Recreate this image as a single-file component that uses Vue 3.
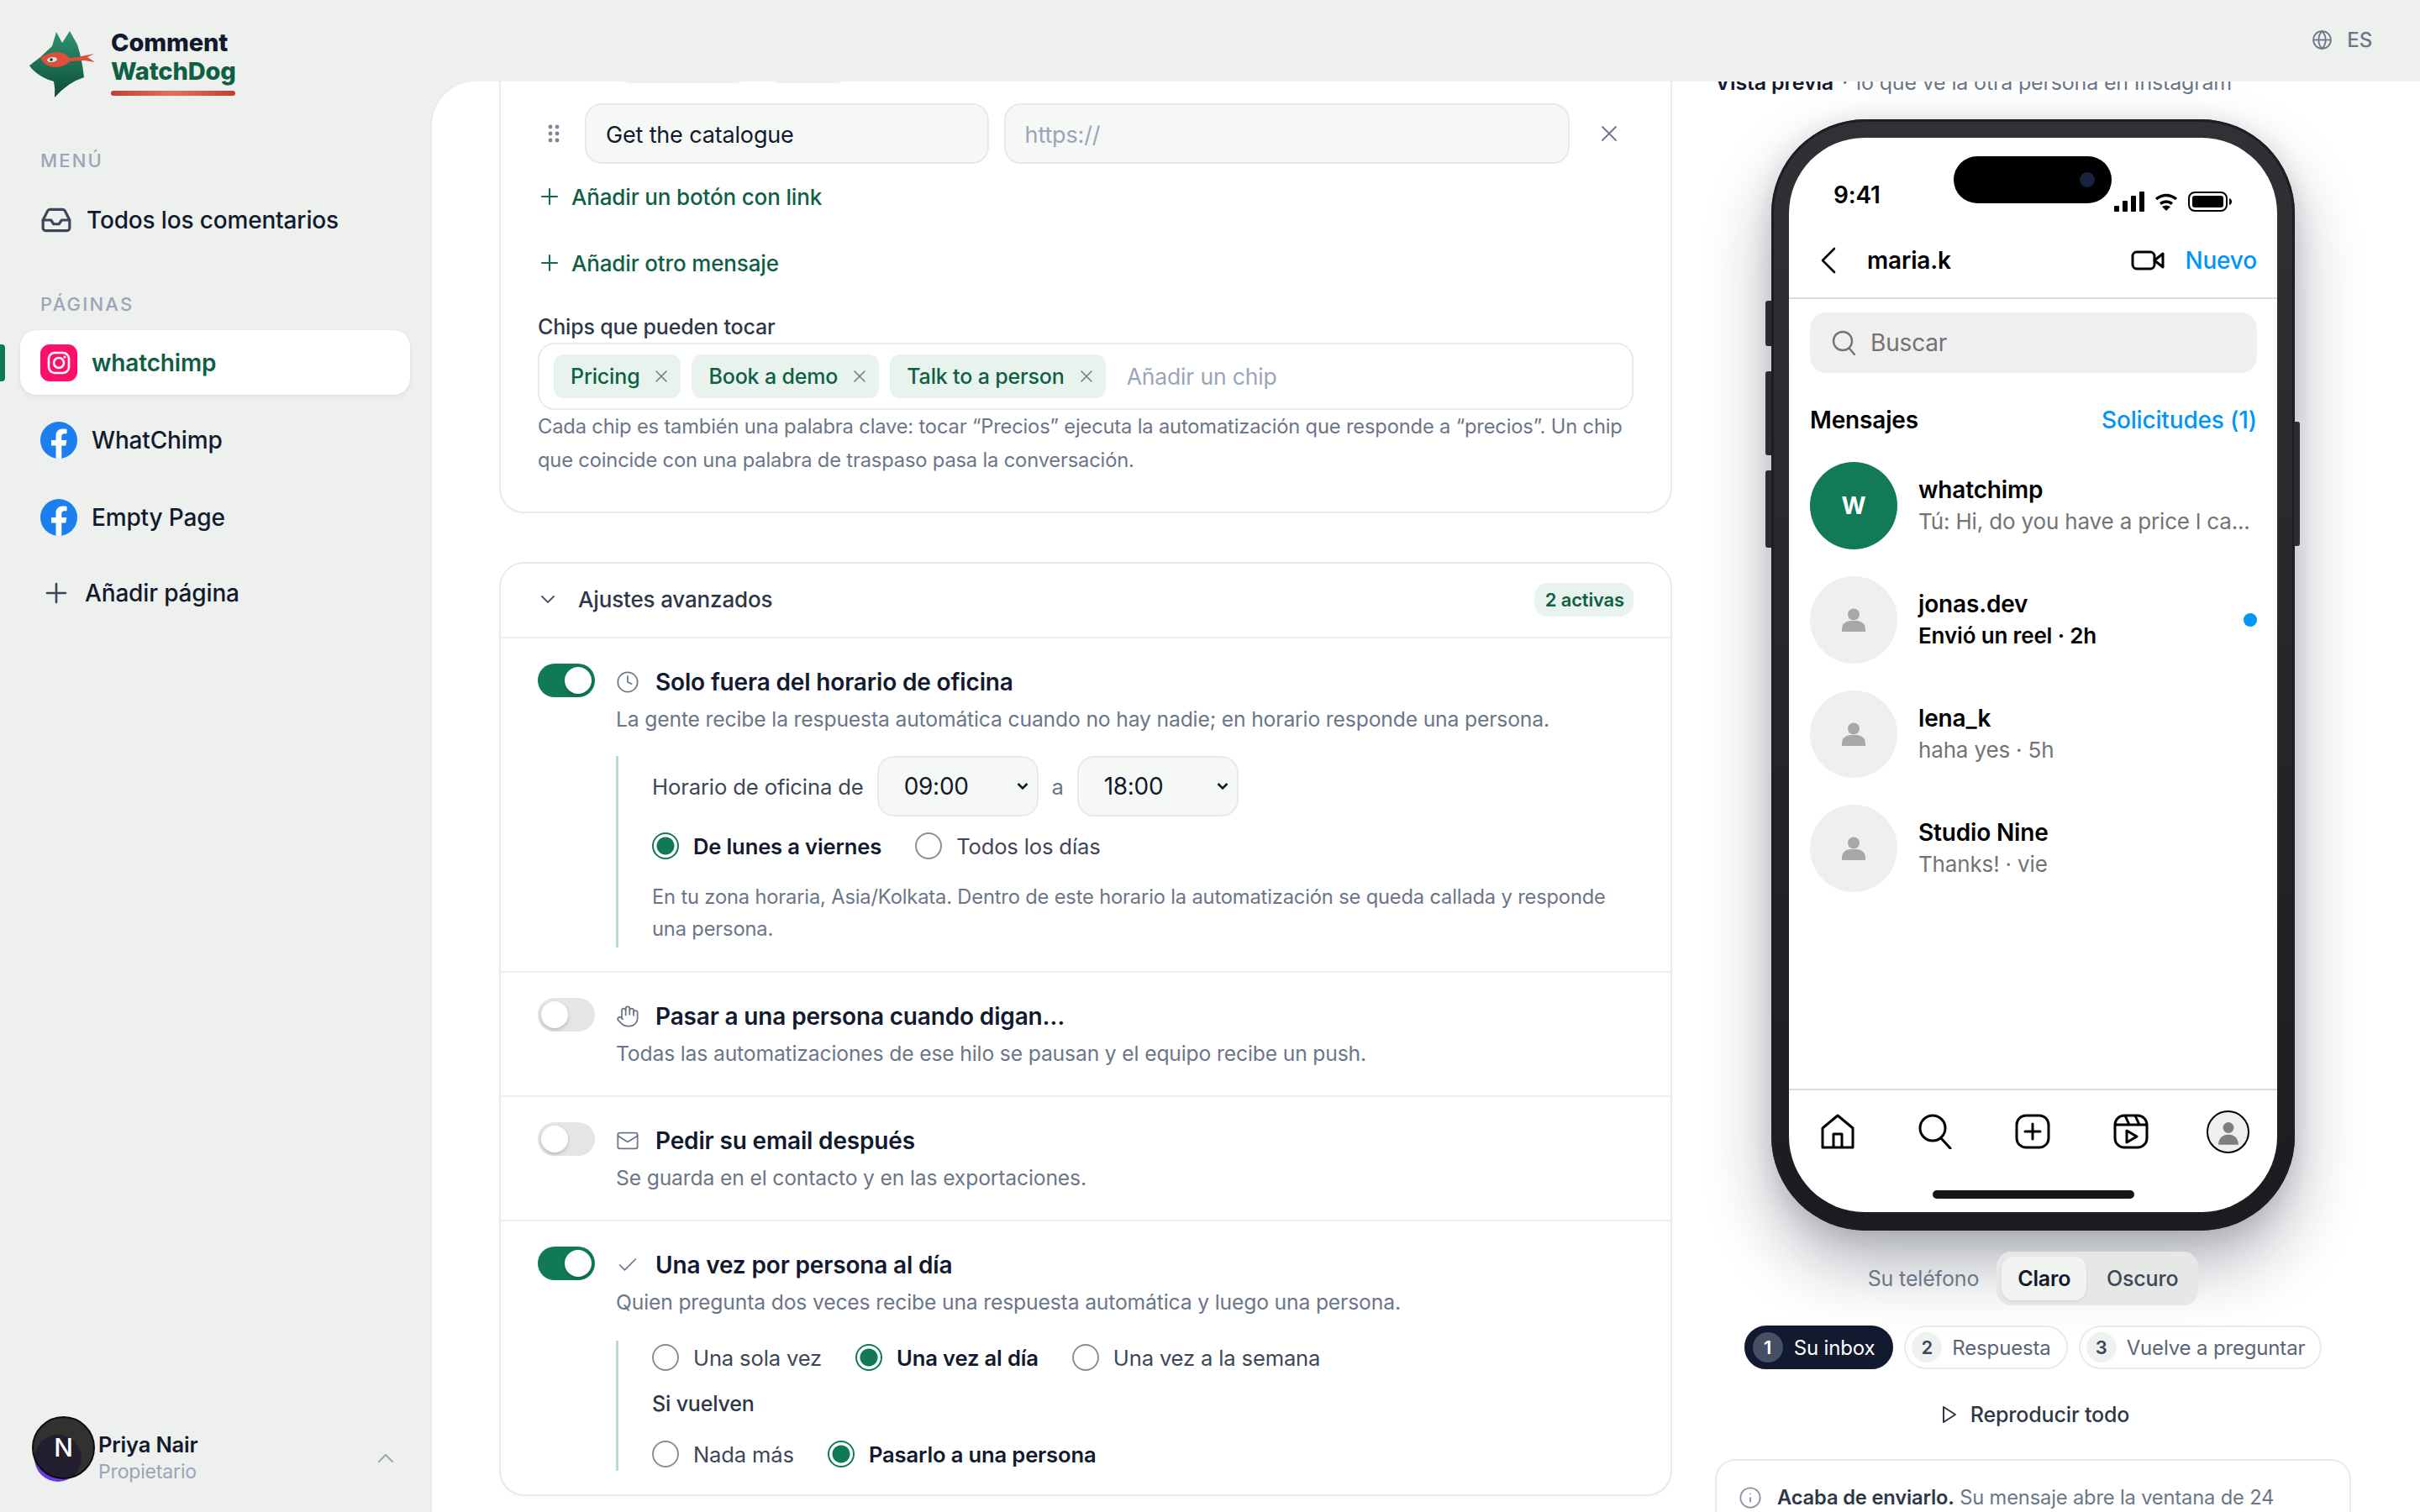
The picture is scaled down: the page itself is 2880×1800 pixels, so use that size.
<script setup>
const pages = [
  { name: 'whatchimp', kind: 'ig', active: true },
  { name: 'WhatChimp', kind: 'fb' },
  { name: 'Empty Page', kind: 'fb' }
]

const chips = ['Pricing', 'Book a demo', 'Talk to a person']

const threads = [
  { name: 'jonas.dev', sub: 'Envió un reel · 2h', unread: true },
  { name: 'lena_k', sub: 'haha yes · 5h' },
  { name: 'Studio Nine', sub: 'Thanks! · vie' }
]

const steps = [
  { n: 1, label: 'Su inbox', on: true },
  { n: 2, label: 'Respuesta' },
  { n: 3, label: 'Vuelve a preguntar' }
]
</script>

<template>
  <div class="app">
    <aside class="sidebar">
      <div class="brand">
        <svg class="dog" viewBox="0 0 78 80" width="78" height="80">
          <defs>
            <linearGradient id="dogfill" x1="0" y1="0" x2="0" y2="1">
              <stop offset="0" stop-color="#2f9472" />
              <stop offset="0.5" stop-color="#1d6f55" />
              <stop offset="1" stop-color="#0d4a39" />
            </linearGradient>
          </defs>
          <path d="M0 42 L13 32 L27 19 L32 2 L39 15 L48 1 L57 17 Q63 36 65 56 Q46 62 30 80 Q31 70 29 61 Q18 58 10 52 Q3 47 0 42 Z" fill="url(#dogfill)" />
          <path d="M13 33 Q20 27 33 26 Q43 26 47 33 L57 32 Q66 30 77 28 L69 32 L78 38 L66 36 L48 37 Q42 44 30 44 Q18 43 13 33 Z" fill="#dc4f3b" />
          <ellipse cx="27" cy="35" rx="6" ry="3" fill="#d7e8de" transform="rotate(-8 27 35)" />
          <circle cx="26" cy="35" r="1.700" fill="#12382c" />
        </svg>
        <div class="brand-text">
          <div class="brand-a">Comment</div>
          <div class="brand-b">WatchDog</div>
          <div class="brand-line"></div>
        </div>
      </div>

      <div class="nav-label first">MENÚ</div>
      <div class="nav-all">
        <svg viewBox="0 0 24 24" width="38" height="38" fill="none" stroke="#3c4658" stroke-width="2" stroke-linecap="round" stroke-linejoin="round">
          <polyline points="22 12 16 12 14 15 10 15 8 12 2 12" />
          <path d="M5.45 5.11 2 12v6a2 2 0 0 0 2 2h16a2 2 0 0 0 2-2v-6l-3.45-6.89A2 2 0 0 0 16.76 4H7.24a2 2 0 0 0-1.79 1.11z" />
        </svg>
        <span>Todos los comentarios</span>
      </div>

      <div class="nav-label second">PÁGINAS</div>
      <div class="page-list">
        <div v-for="p in pages" :key="p.name" class="page" :class="{ active: p.active }">
          <svg v-if="p.kind === 'ig'" viewBox="0 0 44 44" width="44" height="44">
            <rect width="44" height="44" rx="11" fill="#ff0f6b" />
            <rect x="10" y="10" width="24" height="24" rx="7" fill="none" stroke="#fff" stroke-width="2.6" />
            <circle cx="22" cy="22" r="6" fill="none" stroke="#fff" stroke-width="2.6" />
            <circle cx="29" cy="15" r="1.6" fill="#fff" />
          </svg>
          <svg v-else viewBox="0 0 44 44" width="44" height="44">
            <defs>
              <clipPath id="fbclip"><circle cx="22" cy="22" r="22" /></clipPath>
            </defs>
            <circle cx="22" cy="22" r="22" fill="#1b7ff0" />
            <path clip-path="url(#fbclip)" d="M18.5 44V28.5H13V22h5.500v-5c0-5.500 3.200-8.500 8.200-8.500 2.400 0 4.800.4 4.800.4v5.400h-2.700c-2.700 0-3.500 1.700-3.500 3.400V22h6l-1 6.500h-5V44z" fill="#fff" />
          </svg>
          <span>{{ p.name }}</span>
        </div>
        <div class="page add">
          <svg viewBox="0 0 26 26" width="26" height="26" fill="none" stroke="#3c4658" stroke-width="2.600" stroke-linecap="round">
            <path d="M13 2v22M2 13h22" />
          </svg>
          <span>Añadir página</span>
        </div>
      </div>

      <div class="owner">
        <div class="avatar-wrap">
          <div class="avatar-pn">PN</div>
          <div class="dev-badge">N</div>
        </div>
        <div class="owner-text">
          <div class="owner-name">Priya Nair</div>
          <div class="owner-role">Propietario</div>
        </div>
        <svg class="owner-chev" viewBox="0 0 18 10" width="18" height="10" fill="none" stroke="#9aa5b8" stroke-width="2" stroke-linecap="round" stroke-linejoin="round">
          <path d="M1 9l8-8 8 8" />
        </svg>
      </div>
    </aside>

    <div class="shell">
      <header class="topbar">
        <svg viewBox="0 0 24 24" width="25" height="25" fill="none" stroke="#6b7688" stroke-width="1.700">
          <circle cx="12" cy="12" r="10" />
          <path d="M12 2a14.500 14.500 0 0 0 0 20 14.500 14.500 0 0 0 0-20" />
          <path d="M2 12h20" />
        </svg>
        <span>ES</span>
      </header>

      <main class="panel">
        <div class="col-left">
          <section class="card msg-card">
            <div class="cut-tabs"><i></i><i></i></div>
            <div class="btn-row">
              <div class="grip">
                <svg viewBox="0 0 14 22" width="14" height="22" fill="#7d8798">
                  <circle cx="3" cy="3" r="2.400" /><circle cx="11" cy="3" r="2.400" />
                  <circle cx="3" cy="11" r="2.400" /><circle cx="11" cy="11" r="2.400" />
                  <circle cx="3" cy="19" r="2.400" /><circle cx="11" cy="19" r="2.400" />
                </svg>
              </div>
              <div class="field f1">Get the catalogue</div>
              <div class="field f2">https://</div>
              <div class="close">
                <svg viewBox="0 0 20 20" width="20" height="20" fill="none" stroke="#6b7688" stroke-width="1.800" stroke-linecap="round">
                  <path d="M2 2l16 16M18 2L2 18" />
                </svg>
              </div>
            </div>
            <div class="add-link l1">
              <svg viewBox="0 0 20 20" width="20" height="20" fill="none" stroke="#0f6b4e" stroke-width="2" stroke-linecap="round"><path d="M10 1v18M1 10h18" /></svg>
              <span>Añadir un botón con link</span>
            </div>
            <div class="add-link l2">
              <svg viewBox="0 0 20 20" width="20" height="20" fill="none" stroke="#0f6b4e" stroke-width="2" stroke-linecap="round"><path d="M10 1v18M1 10h18" /></svg>
              <span>Añadir otro mensaje</span>
            </div>
            <div class="chips-label">Chips que pueden tocar</div>
            <div class="chips-box">
              <div v-for="c in chips" :key="c" class="chip">
                <span>{{ c }}</span>
                <svg viewBox="0 0 14 14" width="14" height="14" fill="none" stroke="#5d8a78" stroke-width="1.600" stroke-linecap="round"><path d="M1 1l12 12M13 1L1 13" /></svg>
              </div>
              <span class="chip-ph">Añadir un chip</span>
            </div>
            <p class="help">Cada chip es también una palabra clave: tocar “Precios” ejecuta la automatización que responde a “precios”. Un chip que coincide con una palabra de traspaso pasa la conversación.</p>
          </section>

          <section class="card adv-card">
            <div class="adv-head">
              <svg viewBox="0 0 16 10" width="16" height="10" fill="none" stroke="#4a5568" stroke-width="1.800" stroke-linecap="round" stroke-linejoin="round"><path d="M1 1l7 7 7-7" /></svg>
              <span class="adv-title">Ajustes avanzados</span>
              <span class="badge">2 activas</span>
            </div>

            <div class="opt">
              <div class="toggle on"><i></i></div>
              <div class="opt-body">
                <div class="opt-title">
                  <svg viewBox="0 0 24 24" width="28" height="28" fill="none" stroke="#6b7688" stroke-width="1.500" stroke-linecap="round" stroke-linejoin="round"><circle cx="12" cy="12" r="10" /><polyline points="12 6 12 12 16 14" /></svg>
                  <span>Solo fuera del horario de oficina</span>
                </div>
                <p class="opt-desc">La gente recibe la respuesta automática cuando no hay nadie; en horario responde una persona.</p>
                <div class="nested first-block">
                  <div class="hours">
                    <span class="hours-label">Horario de oficina de</span>
                    <div class="time-wrap">
                      <select class="time"><option>09:00</option></select>
                      <svg viewBox="0 0 14 10" width="14" height="10" fill="none" stroke="#111a2e" stroke-width="2.600"><path d="M1.500 2l5.500 5.500L12.500 2" /></svg>
                    </div>
                    <span class="a">a</span>
                    <div class="time-wrap">
                      <select class="time"><option>18:00</option></select>
                      <svg viewBox="0 0 14 10" width="14" height="10" fill="none" stroke="#111a2e" stroke-width="2.600"><path d="M1.500 2l5.500 5.500L12.500 2" /></svg>
                    </div>
                  </div>
                  <div class="radios mt14">
                    <label class="radio sel"><i></i><span>De lunes a viernes</span></label>
                    <label class="radio"><i></i><span>Todos los días</span></label>
                  </div>
                  <p class="note">En tu zona horaria, Asia/Kolkata. Dentro de este horario la automatización se queda callada y responde una persona.</p>
                </div>
              </div>
            </div>

            <div class="opt">
              <div class="toggle"><i></i></div>
              <div class="opt-body">
                <div class="opt-title">
                  <svg viewBox="0 0 24 24" width="28" height="28" fill="none" stroke="#6b7688" stroke-width="1.500" stroke-linecap="round" stroke-linejoin="round"><path d="M18 11V6a2 2 0 0 0-2-2a2 2 0 0 0-2 2" /><path d="M14 10V4a2 2 0 0 0-2-2a2 2 0 0 0-2 2v2" /><path d="M10 10.500V6a2 2 0 0 0-2-2a2 2 0 0 0-2 2v8" /><path d="M18 8a2 2 0 1 1 4 0v6a8 8 0 0 1-8 8h-2c-2.800 0-4.500-.86-5.990-2.340l-3.600-3.600a2 2 0 0 1 2.830-2.820L7 15" /></svg>
                  <span>Pasar a una persona cuando digan…</span>
                </div>
                <p class="opt-desc">Todas las automatizaciones de ese hilo se pausan y el equipo recibe un push.</p>
              </div>
            </div>

            <div class="opt">
              <div class="toggle"><i></i></div>
              <div class="opt-body">
                <div class="opt-title">
                  <svg viewBox="0 0 24 24" width="28" height="28" fill="none" stroke="#6b7688" stroke-width="1.500" stroke-linecap="round" stroke-linejoin="round"><rect x="2" y="4" width="20" height="16" rx="2" /><path d="m22 7-8.970 5.700a1.940 1.940 0 0 1-2.060 0L2 7" /></svg>
                  <span>Pedir su email después</span>
                </div>
                <p class="opt-desc">Se guarda en el contacto y en las exportaciones.</p>
              </div>
            </div>

            <div class="opt last">
              <div class="toggle on"><i></i></div>
              <div class="opt-body">
                <div class="opt-title">
                  <svg viewBox="0 0 24 24" width="28" height="28" fill="none" stroke="#6b7688" stroke-width="1.500" stroke-linecap="round" stroke-linejoin="round"><path d="M20 6 9 17l-5-5" /></svg>
                  <span>Una vez por persona al día</span>
                </div>
                <p class="opt-desc">Quien pregunta dos veces recibe una respuesta automática y luego una persona.</p>
                <div class="nested">
                  <div class="radios">
                    <label class="radio"><i></i><span>Una sola vez</span></label>
                    <label class="radio sel"><i></i><span>Una vez al día</span></label>
                    <label class="radio"><i></i><span>Una vez a la semana</span></label>
                  </div>
                  <div class="si">Si vuelven</div>
                  <div class="radios">
                    <label class="radio"><i></i><span>Nada más</span></label>
                    <label class="radio sel"><i></i><span>Pasarlo a una persona</span></label>
                  </div>
                </div>
              </div>
            </div>
          </section>
        </div>

        <div class="col-right">
          <div class="preview-title"><b>Vista previa</b><span class="sep">·</span>lo que ve la otra persona en Instagram</div>

          <div class="phone">
            <i class="side l a1"></i><i class="side l a2"></i><i class="side l a3"></i><i class="side r"></i>
            <div class="screen">
              <div class="island"><i></i></div>
              <div class="status">
                <span class="clock">9:41</span>
                <div class="status-icons">
                  <svg viewBox="0 0 36 24" width="36" height="24" fill="#000"><rect x="0" y="17" width="6" height="7" rx="1" /><rect x="10" y="11" width="6" height="13" rx="1" /><rect x="20" y="5" width="6" height="19" rx="1" /><rect x="30" y="0" width="6" height="24" rx="1" /></svg>
                  <svg viewBox="0 0 28 22" width="28" height="22" fill="none" stroke="#000" stroke-width="3.400"><path d="M2 8q12-9 24 0" /><path d="M7 13.500q7-5 14 0" /><path d="M14 22l-5-5q5-3 10 0z" fill="#000" stroke="none" /></svg>
                  <svg viewBox="0 0 52 24" width="52" height="24"><rect x="1" y="1" width="45" height="22" rx="7" fill="none" stroke="#000" stroke-width="2" /><rect x="5" y="5" width="37" height="14" rx="3" fill="#000" /><path d="M49 8q3 1 3 4t-3 4z" fill="#000" /></svg>
                </div>
              </div>
              <div class="ig-nav">
                <svg viewBox="0 0 20 32" width="20" height="32" fill="none" stroke="#000" stroke-width="2.600" stroke-linecap="round" stroke-linejoin="round"><path d="M17 2L3 16l14 14" /></svg>
                <span class="ig-user">maria.k</span>
                <svg viewBox="0 0 40 24" width="40" height="24" fill="none" stroke="#000" stroke-width="3" stroke-linejoin="round"><rect x="2" y="2" width="26" height="20" rx="5" /><path d="M28 12l10-8v16z" /></svg>
                <span class="ig-new">Nuevo</span>
              </div>
              <div class="ig-search">
                <svg viewBox="0 0 28 30" width="28" height="30" fill="none" stroke="#737373" stroke-width="2.400" stroke-linecap="round"><circle cx="13" cy="13" r="11" /><path d="M21 22l6 7" /></svg>
                <span>Buscar</span>
              </div>
              <div class="ig-heads">
                <span class="h-msg">Mensajes</span>
                <span class="h-req">Solicitudes (1)</span>
              </div>
              <div class="thread">
                <div class="av green">W</div>
                <div class="t-text">
                  <div class="t-name">whatchimp</div>
                  <div class="t-sub">Tú: Hi, do you have a price l ca...</div>
                </div>
              </div>
              <div v-for="t in threads" :key="t.name" class="thread">
                <div class="av">
                  <svg viewBox="0 0 28 28" width="28" height="28" fill="#a8a8a8"><circle cx="14" cy="7.500" r="7" /><path d="M0 28v-3q0-8 9-10h10q9 2 9 10v3z" /></svg>
                </div>
                <div class="t-text">
                  <div class="t-name">{{ t.name }}</div>
                  <div class="t-sub" :class="{ strong: t.unread }">{{ t.sub }}</div>
                </div>
                <i v-if="t.unread" class="dot"></i>
              </div>
              <div class="grow"></div>
              <div class="tabbar">
                <svg viewBox="0 0 40 42" width="40" height="42" fill="none" stroke="#000" stroke-width="3" stroke-linejoin="round"><path d="M2 40V17L20 2l18 15v23z" /><path d="M15 40V24h10v16" /></svg>
                <svg viewBox="0 0 40 42" width="40" height="42" fill="none" stroke="#000" stroke-width="3" stroke-linecap="round"><circle cx="17" cy="17" r="15" /><path d="M27 29l11 12" /></svg>
                <svg viewBox="0 0 42 42" width="42" height="42" fill="none" stroke="#000" stroke-width="3" stroke-linecap="round"><rect x="2" y="2" width="38" height="38" rx="11" /><path d="M21 12v18M12 21h18" /></svg>
                <svg viewBox="0 0 42 42" width="42" height="42" fill="none" stroke="#000" stroke-width="3" stroke-linejoin="round"><rect x="2" y="2" width="38" height="38" rx="11" /><path d="M2 13h38M14 2l5 11M26 2l5 11" /><path d="M16 20l12 7-12 7z" /></svg>
                <div class="tab-profile">
                  <svg viewBox="0 0 26 30" width="24" height="28" fill="#7e7e7e"><circle cx="13" cy="8" r="7" /><path d="M0 30q1-13 13-13t13 13z" /></svg>
                </div>
              </div>
              <div class="homebar"></div>
            </div>
          </div>

          <div class="theme-row">
            <span class="theme-label">Su teléfono</span>
            <div class="seg">
              <span class="seg-on">Claro</span>
              <span class="seg-off">Oscuro</span>
            </div>
          </div>

          <div class="steps">
            <div v-for="s in steps" :key="s.n" class="step" :class="{ on: s.on }">
              <i>{{ s.n }}</i>
              <span>{{ s.label }}</span>
            </div>
          </div>

          <div class="replay">
            <svg viewBox="0 0 18 22" width="18" height="22" fill="none" stroke="#2d3748" stroke-width="2" stroke-linejoin="round"><path d="M2 2l14 9-14 9z" /></svg>
            <span>Reproducir todo</span>
          </div>

          <div class="info">
            <svg viewBox="0 0 24 24" width="28" height="28" fill="none" stroke="#8a94a5" stroke-width="1.600" stroke-linecap="round"><circle cx="12" cy="12" r="10" /><path d="M12 16v-4M12 8h.01" /></svg>
            <p><b>Acaba de enviarlo.</b> Su mensaje abre la ventana de 24</p>
          </div>
        </div>
      </main>
    </div>
  </div>
</template>

<style>
html, body { margin: 0; background: #edf0ec; }
</style>

<style scoped>
* { box-sizing: border-box; }
p { margin: 0; }

.app {
  width: 2880px;
  height: 1800px;
  display: flex;
  overflow: hidden;
  background: #edf0ec;
  font-family: Inter, "Noto Sans", sans-serif;
  letter-spacing: -0.01em;
  color: #111a2e;
}

.sidebar {
  width: 514px;
  flex: none;
  height: 100%;
  display: flex;
  flex-direction: column;
}
.brand { display: flex; gap: 19px; margin: 34px 0 0 35px; height: 80px; }
.dog { margin-top: 2px; flex: none; }
.brand-text { width: 148px; }
.brand-a, .brand-b { font-size: 29px; line-height: 34px; font-weight: 800; white-space: nowrap; }
.brand-b { color: #0f5f45; }
.brand-line {
  height: 6px;
  margin-top: 6px;
  border-radius: 3px;
  background: linear-gradient(90deg, #c2402f, #e2705c 50%, #c2402f);
}

.nav-label {
  margin-left: 48px;
  font-size: 22px;
  line-height: 30px;
  font-weight: 500;
  letter-spacing: 2.200px;
  color: #9aa5b8;
}
.nav-label.first { margin-top: 62px; }
.nav-label.second { margin-top: 55px; }
.nav-all {
  display: flex;
  align-items: center;
  gap: 17px;
  height: 60px;
  margin: 26px 0 0 48px;
  font-size: 28px;
  font-weight: 500;
}
.page-list { display: flex; flex-direction: column; gap: 15px; margin-top: 16px; }
.page {
  display: flex;
  align-items: center;
  gap: 17px;
  height: 77px;
  margin: 0 26px 0 24px;
  padding-left: 24px;
  border-radius: 20px;
  font-size: 28px;
  font-weight: 500;
  position: relative;
}
.page.active {
  background: #fff;
  color: #0f5f45;
  font-weight: 600;
  box-shadow: 0 2px 6px rgba(15, 23, 42, 0.08);
}
.page.active::before {
  content: '';
  position: absolute;
  left: -24px;
  top: 17px;
  width: 6px;
  height: 44px;
  border-radius: 0 4px 4px 0;
  background: #0f7a55;
}
.page.add { gap: 21px; padding-left: 30px; margin-top: -2px; }

.owner {
  margin: auto 0 32px 38px;
  display: flex;
  align-items: flex-start;
  position: relative;
}
.avatar-wrap { width: 75px; height: 75px; position: relative; flex: none; }
.avatar-pn {
  position: absolute;
  left: 3px;
  top: 22px;
  width: 56px;
  height: 56px;
  border-radius: 50%;
  background: #6a3be0;
  color: #4c3c70;
  font: 500 20px/56px "Liberation Serif", serif;
  text-align: center;
}
.dev-badge {
  position: absolute;
  inset: 0;
  border-radius: 50%;
  background: rgba(28, 28, 28, 0.9);
  border: 2px solid #0c0c0c;
  color: #fff;
  font-size: 30px;
  font-weight: 500;
  line-height: 71px;
  text-align: center;
}
.owner-text { margin: 18px 0 0 4px; }
.owner-name { font-size: 25.500px; line-height: 32px; font-weight: 600; }
.owner-role { font-size: 23px; line-height: 32px; color: #9aa5b8; }
.owner-chev { position: absolute; left: 412px; top: 45px; }

.shell { flex: 1; min-width: 0; display: flex; flex-direction: column; }
.topbar {
  height: 97px;
  flex: none;
  display: flex;
  align-items: center;
  justify-content: flex-end;
  gap: 17px;
  padding-right: 57px;
  padding-bottom: 2px;
  font-size: 24px;
  font-weight: 500;
  color: #6b7688;
}
.panel {
  flex: 1;
  min-height: 0;
  background: #fff;
  border-top-left-radius: 52px;
  overflow: hidden;
  display: flex;
  gap: 51px;
  padding: 0 82px 0 80px;
  box-shadow: -2px 0 0 #e7eae6;
}

.col-left { width: 1396px; flex: none; margin-top: -40px; }
.card {
  border: 2px solid #e9ece8;
  border-radius: 30px;
  background: #fff;
  box-shadow: 0 2px 4px rgba(15, 23, 42, 0.02);
}
.msg-card { padding: 0 44px 41px; }
.cut-tabs { display: flex; gap: 22px; margin-left: 95px; height: 40px; }
.cut-tabs i { display: block; width: 155px; border: 2px solid #eef0ed; border-radius: 16px; }
.cut-tabs i + i { width: 98px; }
.btn-row { display: flex; align-items: center; gap: 18px; margin-top: 24px; }
.grip { width: 39px; display: flex; justify-content: center; margin-right: -1px; }
.field {
  height: 72px;
  display: flex;
  align-items: center;
  padding: 2px 0 0 23px;
  border: 2px solid #e7ebe6;
  border-radius: 20px;
  background: #f6f8f5;
  font-size: 27px;
}
.f1 { width: 481px; }
.f2 { width: 674px; color: #9aa5b8; }
.close { width: 58px; display: flex; justify-content: center; }

.add-link {
  display: flex;
  align-items: center;
  gap: 16px;
  height: 40px;
  margin-left: 4px;
  font-size: 26px;
  font-weight: 500;
  color: #0f5f45;
}
.l1 { margin-top: 19px; }
.l2 { margin-top: 39px; }
.chips-label { margin-top: 37px; font-size: 25px; line-height: 38px; font-weight: 500; color: #2d3748; }
.chips-box {
  height: 80px;
  display: flex;
  align-items: center;
  gap: 13px;
  padding-left: 17px;
  border: 2px solid #e9ece8;
  border-radius: 20px;
}
.chip {
  height: 52px;
  display: flex;
  align-items: center;
  gap: 19px;
  padding: 0 16px 0 20px;
  border-radius: 12px;
  background: #e7f3ec;
  color: #0f5f45;
  font-size: 25px;
  font-weight: 500;
}
.chip-ph { margin-left: 12px; font-size: 26.500px; color: #9aa5b8; }
.help { font-size: 23.700px; line-height: 40px; color: #6b7688; }

.adv-card { margin-top: 58px; }
.adv-head {
  height: 89px;
  display: flex;
  align-items: center;
  padding: 0 44px 2px 48px;
  border-bottom: 2px solid #eef0ed;
  font-size: 26px;
  font-weight: 500;
  color: #2d3748;
}
.adv-title { margin-left: 28px; flex: 1; }
.badge {
  height: 40px;
  padding: 0 11px 0 13px;
  display: flex;
  align-items: center;
  border-radius: 16px;
  background: #e7f3ec;
  color: #0f5f45;
  font-size: 22px;
  font-weight: 600;
}

.opt {
  display: flex;
  gap: 25px;
  padding: 29px 44px 28px;
  border-bottom: 2px solid #eef0ed;
}
.opt.last { border-bottom: 0; padding-bottom: 28px; }
.toggle {
  width: 68px;
  height: 40px;
  flex: none;
  margin-top: 1px;
  padding: 4px;
  border-radius: 20px;
  background: #e3e6e2;
  display: flex;
}
.toggle i { display: block; width: 32px; height: 32px; border-radius: 50%; background: #fff; box-shadow: 0 2px 4px rgba(0, 0, 0, 0.2); }
.toggle.on { background: #0f7a55; justify-content: flex-end; }
.opt-body { flex: 1; min-width: 0; }
.opt-title {
  display: flex;
  align-items: center;
  gap: 19px;
  height: 44px;
  margin-top: 1px;
  font-size: 28px;
  font-weight: 600;
}
.opt-desc { font-size: 24.7px; line-height: 44px; color: #6b7688; }
.nested { margin-top: 24px; border-left: 3px solid #b9dccf; padding-left: 40px; }
.nested.first-block { margin-top: 22px; padding-bottom: 3px; }
.hours { display: flex; align-items: center; font-size: 25.700px; color: #3d4758; }
.hours-label { margin-right: 16px; }
.time-wrap { position: relative; width: 192px; height: 72px; flex: none; }
.time-wrap svg { position: absolute; right: 12px; top: 31px; pointer-events: none; }
.time {
  appearance: none;
  display: block;
  width: 192px;
  height: 72px;
  padding-left: 30px;
  border: 2px solid #e7ebe6;
  border-radius: 20px;
  background-color: #f6f8f5;
  color: #111a2e;
  font-family: Inter, sans-serif;
  font-size: 28px;
  letter-spacing: -0.01em;
}
.a { width: 46px; text-align: center; color: #6b7688; }
.radios { display: flex; gap: 40px; height: 40px; }
.mt14 { margin-top: 15px; }
.radio { display: flex; align-items: center; gap: 17px; font-size: 25.600px; color: #3d4758; }
.radio i {
  display: block;
  width: 32px;
  height: 32px;
  border-radius: 50%;
  border: 2px solid #8a8f98;
  background: #fff;
}
.radio.sel { color: #111a2e; font-weight: 600; }
.radio.sel i { border-color: #0f7a55; background: radial-gradient(circle, #0f7a55 0 10px, #fff 11px); }
.note { margin-top: 22px; font-size: 23.700px; line-height: 38px; color: #6b7688; }
.si { margin: 15px 0 20px; font-size: 25px; line-height: 40px; font-weight: 500; color: #2d3748; }

.col-right { width: 757px; flex: none; display: flex; flex-direction: column; align-items: center; margin-top: -19px; }
.preview-title { align-self: flex-start; font-size: 25px; line-height: 40px; color: #6b7688; white-space: nowrap; }
.preview-title b { color: #111a2e; font-weight: 600; }
.sep { margin: 0 10px; }

.phone {
  width: 623px;
  height: 1323px;
  margin-top: 24px;
  padding: 22px 21px;
  flex: none;
  position: relative;
  border-radius: 112px;
  background: linear-gradient(180deg, #2f3135, #1a1c1f);
  box-shadow: inset 0 0 0 3px #1c1e21, 0 40px 80px rgba(15, 23, 42, 0.32), 0 6px 30px rgba(15, 23, 42, 0.12);
}
.side { position: absolute; width: 7px; background: #2a2c30; display: block; }
.side.l { left: -7px; border-radius: 3px 0 0 3px; }
.side.r { right: -6px; top: 360px; height: 148px; border-radius: 0 3px 3px 0; }
.a1 { top: 216px; height: 54px; }
.a2 { top: 300px; height: 100px; }
.a3 { top: 418px; height: 92px; }
.screen {
  width: 581px;
  height: 1279px;
  position: relative;
  overflow: hidden;
  display: flex;
  flex-direction: column;
  border-radius: 90px;
  background: #fff;
  color: #000;
}
.island {
  position: absolute;
  left: 196px;
  top: 22px;
  width: 188px;
  height: 56px;
  border-radius: 28px;
  background: #000;
}
.island i { display: block; position: absolute; right: 20px; top: 19px; width: 18px; height: 18px; border-radius: 50%; background: #1a2340; }
.status { height: 106px; flex: none; position: relative; padding: 48px 0 0 53px; }
.clock { font-size: 28px; line-height: 40px; font-weight: 600; }
.status-icons { position: absolute; right: 54px; top: 64px; display: flex; align-items: center; gap: 12px; }
.ig-nav {
  height: 86px;
  flex: none;
  display: flex;
  align-items: center;
  padding: 0 24px 4px 37px;
  border-bottom: 2px solid #dbdbdb;
}
.ig-user { margin-left: 36px; flex: 1; font-size: 28px; font-weight: 600; }
.ig-new { margin-left: 24px; font-size: 28px; font-weight: 500; color: #0095f6; }
.ig-search {
  height: 72px;
  flex: none;
  margin: 16px 24px 0 25px;
  display: flex;
  align-items: center;
  gap: 18px;
  padding-left: 26px;
  border-radius: 20px;
  background: #efefef;
  color: #737373;
  font-size: 28px;
}
.ig-heads {
  margin: 36px 24px 0 25px;
  display: flex;
  justify-content: space-between;
  line-height: 40px;
  font-size: 28px;
  flex: none;
}
.h-msg { font-weight: 600; }
.h-req { font-weight: 500; color: #0095f6; }
.thread { display: flex; align-items: center; gap: 25px; margin: 32px 24px 0 25px; flex: none; }
.ig-heads + .thread { margin-top: 30px; }
.av {
  width: 104px;
  height: 104px;
  flex: none;
  display: flex;
  align-items: center;
  justify-content: center;
  border-radius: 50%;
  background: #efefef;
}
.av.green { background: #127a57; color: #fff; font-size: 28px; font-weight: 700; }
.t-text { flex: 1; min-width: 0; }
.t-name { font-size: 28px; line-height: 38px; font-weight: 600; }
.t-sub { font-size: 26px; line-height: 38px; color: #737373; white-space: nowrap; }
.t-sub.strong { color: #000; font-weight: 600; }
.dot { width: 16px; height: 16px; border-radius: 50%; background: #0095f6; display: block; flex: none; }
.grow { flex: 1; }
.tabbar {
  height: 100px;
  flex: none;
  display: grid;
  grid-template-columns: repeat(5, 1fr);
  align-items: center;
  justify-items: center;
  border-top: 2px solid #dbdbdb;
}
.tab-profile {
  width: 51px;
  height: 51px;
  display: flex;
  align-items: flex-end;
  justify-content: center;
  padding-bottom: 8px;
  border-radius: 50%;
  border: 2px solid #000;
  background: #efefef;
}
.homebar { width: 240px; height: 10px; margin: 21px auto 16px; border-radius: 5px; background: #161616; flex: none; }

.theme-row { display: flex; align-items: center; gap: 21px; margin-top: 25px; position: relative; }
.theme-label { font-size: 25px; color: #6b7688; }
.seg {
  height: 64px;
  display: flex;
  align-items: center;
  padding: 0 0 0 6px;
  border-radius: 18px;
  background: #e5e8e4;
  font-size: 25px;
}
.seg-on {
  width: 101px;
  height: 52px;
  display: flex;
  align-items: center;
  justify-content: center;
  border-radius: 14px;
  background: #f1f3f0;
  font-weight: 600;
  box-shadow: 0 1px 3px rgba(15, 23, 42, 0.1);
}
.seg-off { width: 133px; text-align: center; font-weight: 500; color: #3d4758; }

.steps { display: flex; gap: 13px; margin-top: 24px; }
.step {
  height: 52px;
  display: flex;
  align-items: center;
  gap: 12px;
  padding: 0 18px 0 7px;
  border: 2px solid #e9ece8;
  border-radius: 26px;
  font-size: 24px;
  color: #5a6577;
}
.step i {
  width: 36px;
  height: 36px;
  display: flex;
  align-items: center;
  justify-content: center;
  border-radius: 50%;
  background: #eff1ee;
  color: #3d4758;
  font-size: 22px;
  font-style: normal;
  font-weight: 600;
}
.step.on { gap: 13px; padding: 0 20px 0 8px; background: #111a2e; border-color: #111a2e; color: #fff; }
.step.on i { background: #465064; color: #fff; }

.replay {
  display: flex;
  align-items: center;
  gap: 16px;
  height: 40px;
  margin: 39px 0 0 6px;
  font-size: 25px;
  font-weight: 500;
  color: #2d3748;
}

.info {
  align-self: stretch;
  margin-top: 38px;
  padding: 24px 26px 40px;
  display: flex;
  gap: 18px;
  border: 2px solid #e9ece8;
  border-radius: 24px;
  background: #fff;
}
.info svg { margin-top: 6px; flex: none; }
.info p { font-size: 23.700px; line-height: 40px; color: #6b7688; }
.info b { color: #2d3748; font-weight: 600; }
</style>
